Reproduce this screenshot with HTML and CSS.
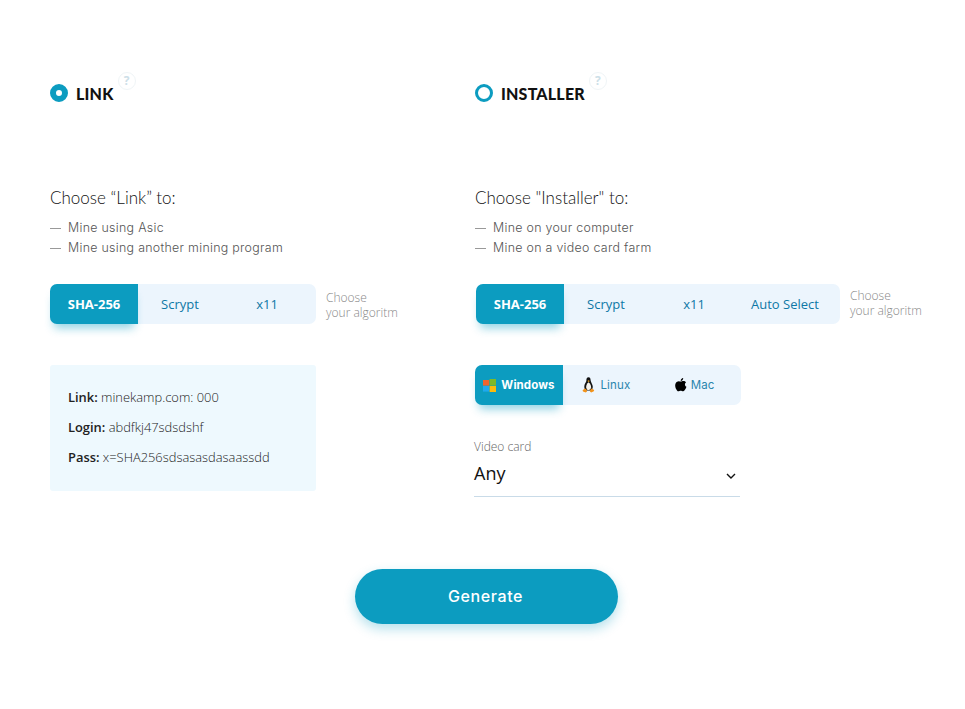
FILE: index.html
```html
<!DOCTYPE html>
<html lang="en">
<head>
    <meta charset="UTF-8">
    <meta name="viewport" content="width=device-width, initial-scale=1.0">
    <title>Generate</title>
    <link rel="stylesheet" href="styles.css">
</head>
<body>

<div class="columns">
    <!-- Link -->
    <section class="col">
        <div class="title">
            <span class="radio radio-on"></span>
            <span class="title-text">LINK<span class="help">?</span></span>
        </div>
        <h2 class="choose">Choose “Link” to:</h2>
        <ul class="uses">
            <li>Mine using Asic</li>
            <li>Mine using another mining program</li>
        </ul>
        <div class="algo-row">
            <div class="seg">
                <a class="seg-item active w88">SHA-256</a>
                <a class="seg-item w84">Scrypt</a>
                <a class="seg-item w90">x11</a>
            </div>
            <p class="hint">Choose<br>your algoritm</p>
        </div>
        <div class="info">
            <p><b>Link:</b> minekamp.com: 000</p>
            <p><b>Login:</b> abdfkj47sdsdshf</p>
            <p><b>Pass:</b> x=SHA256sdsasasdasaassdd</p>
        </div>
    </section>

    <!-- Installer -->
    <section class="col">
        <div class="title">
            <span class="radio"></span>
            <span class="title-text">INSTALLER<span class="help">?</span></span>
        </div>
        <h2 class="choose">Choose "Installer" to:</h2>
        <ul class="uses">
            <li>Mine on your computer</li>
            <li>Mine on a video card farm</li>
        </ul>
        <div class="algo-row algo-row-wide">
            <div class="seg">
                <a class="seg-item active w88">SHA-256</a>
                <a class="seg-item w84">Scrypt</a>
                <a class="seg-item w92">x11</a>
                <a class="seg-item w90">Auto Select</a>
            </div>
            <p class="hint hint-up">Choose<br>your algoritm</p>
        </div>
        <div class="seg seg-os">
            <a class="seg-item active w88 os">
                <svg width="13" height="13" viewBox="0 0 13 13">
                    <rect x="0" y="1" width="6.2" height="5.6" fill="#f0642d"/>
                    <rect x="6.6" y="0" width="6.4" height="6.6" fill="#7db928"/>
                    <rect x="0" y="7" width="6.2" height="5.6" fill="#1fa9ee"/>
                    <rect x="6.6" y="7" width="6.4" height="6" fill="#fbbb0c"/>
                </svg>
                <span>Windows</span>
            </a>
            <a class="seg-item w87 os">
                <svg width="13" height="16" viewBox="0 0 13 16">
                    <path d="M6.5 0.3C4.8 0.3 4.3 1.7 4.4 3.4 4.5 5 2.4 6.8 2.3 9.2 2.2 11 2.8 12.6 4 13.4L9 13.4C10.4 12.4 11 10.8 10.7 9 10.3 6.8 8.7 5 8.6 3.2 8.5 1.6 8.1 0.3 6.5 0.3Z" fill="#111"/>
                    <path d="M6.6 5.2C5 6.4 4 8.4 4.2 10.4 4.4 12 5.4 13 6.6 13 8 13 9 11.8 9.1 10.2 9.2 8.2 8 6.2 6.6 5.2Z" fill="#f4f1ea"/>
                    <path d="M5.4 3.9L6.6 3.2 7.8 3.9 6.6 4.9Z" fill="#f2a51f"/>
                    <path d="M2.8 11.6L0.6 13.2 1 14.4 3.8 15.6 5 14.4 4.4 12.2Z" fill="#f2931a"/>
                    <path d="M9.6 11.4L12.2 13 11.8 14.2 9.2 15.6 7.9 14.4 8.6 12.2Z" fill="#f2931a"/>
                </svg>
                <span>Linux</span>
            </a>
            <a class="seg-item w91 os os-mac">
                <svg width="12" height="14" viewBox="0 0 12 14">
                    <path d="M8.2 0C8.3 1.5 7.2 2.9 5.7 2.9 5.6 1.4 6.8 0.2 8.2 0Z" fill="#000"/>
                    <path d="M5.9 3.6C6.6 3.6 7.3 3.1 8.4 3.1 9.4 3.1 10.4 3.6 11 4.5 9.4 5.4 9.6 7.9 11.5 8.7 11 10.1 10.4 11.4 9.4 12.6 8.5 13.7 7.7 13.2 6.8 12.9 6 12.6 5.3 12.7 4.5 13 3.5 13.4 2.9 13.6 2 12.5 0.4 10.5-0.5 7.3 0.8 5.1 1.5 3.9 2.6 3.2 3.8 3.2 4.6 3.2 5.3 3.6 5.9 3.6Z" fill="#000"/>
                </svg>
                <span>Mac</span>
            </a>
        </div>
        <div class="field">
            <label class="field-label">Video card</label>
            <div class="field-value">
                <span>Any</span>
                <svg width="10" height="6" viewBox="0 0 10 6"><path d="M1 1l4 4 4-4" fill="none" stroke="#111" stroke-width="1.4"/></svg>
            </div>
        </div>
    </section>
</div>

<div class="actions">
    <button class="generate">Generate</button>
</div>

</body>
</html>
```

FILE: styles.css
```css
* {
    margin: 0;
    padding: 0;
    box-sizing: border-box;
}

body {
    height: 709px;
    background: #fff;
    font-family: "Open Sans", sans-serif;
    overflow: hidden;
}

.columns {
    display: grid;
    grid-template-columns: 425px 1fr;
    padding: 84px 0 0 50px;
}

/* Заголовок с радио */
.title {
    display: flex;
    align-items: center;
    gap: 8px;
    height: 18px;
}

.radio {
    width: 18px;
    height: 18px;
    border-radius: 50%;
    border: 3.5px solid #0c9cc0;
    background: #fff;
}

.radio-on {
    border-width: 6px;
}

.title-text {
    position: relative;
    font-family: Lato, sans-serif;
    font-size: 16px;
    font-weight: 900;
    letter-spacing: 0.2px;
    color: #111;
}

.help {
    position: absolute;
    right: -22px;
    top: -12px;
    width: 18px;
    height: 18px;
    border: 1px solid #f0f5f7;
    border-radius: 50%;
    text-align: center;
    font-family: "Open Sans", sans-serif;
    font-size: 12px;
    font-weight: 700;
    line-height: 16px;
    letter-spacing: 0;
    color: #cde0e8;
}

.choose {
    margin-top: 86px;
    font-family: Lato, sans-serif;
    font-size: 17px;
    font-weight: 300;
    line-height: 20px;
    color: #111;
}

.uses {
    list-style: none;
    margin-top: 10px;
}

.uses li {
    height: 20px;
    font-family: Inter, sans-serif;
    font-size: 12.4px;
    font-weight: 300;
    letter-spacing: 0.3px;
    line-height: 20px;
    color: #555;
}

.uses li::before {
    content: "";
    display: inline-block;
    width: 11px;
    height: 1px;
    margin-right: 7px;
    vertical-align: 3px;
    background: #999;
}

/* Переключатели */
.algo-row {
    display: flex;
    align-items: center;
    gap: 10px;
    margin-top: 26px;
}

.algo-row-wide {
    margin-left: 1px;
}

.seg {
    display: flex;
    height: 40px;
    padding-right: 4px;
    background: #ecf5fd;
    border-radius: 7px;
}

.algo-row-wide .seg {
    padding-right: 10px;
}

.seg-item {
    display: flex;
    align-items: center;
    justify-content: center;
    font-size: 13px;
    color: #0e78a6;
}

.seg-item.active {
    background: #0c9cc0;
    border-radius: 7px 0 0 7px;
    color: #fff;
    font-weight: 700;
    box-shadow: 0 8px 10px -4px rgba(12, 156, 192, 0.45);
}

.w84 { width: 84px; }
.w87 { width: 87px; }
.w88 { width: 88px; }
.w90 { width: 90px; }
.w91 { width: 91px; }
.w92 { width: 92px; }

.hint {
    margin-top: 2px;
    font-size: 12px;
    font-weight: 300;
    line-height: 15px;
    color: #888;
}

.hint-up {
    margin-top: -3px;
}

.info {
    width: 266px;
    height: 126px;
    margin-top: 41px;
    padding: 17px 18px 0;
    background: #eef9fe;
    border-radius: 3px;
    font-size: 12.9px;
    font-weight: 300;
    line-height: 30px;
    color: #222;
}

.info b {
    font-weight: 600;
}

/* Выбор ОС */
.seg-os {
    width: 266px;
    margin-top: 41px;
    padding-right: 0;
}

.os {
    gap: 5px;
    font-family: Inter, sans-serif;
    font-size: 11.5px;
    font-weight: 400;
    letter-spacing: 0.2px;
    color: #2a85ad;
}

.os-mac {
    gap: 4px;
    letter-spacing: 0;
    padding-right: 2px;
}

.seg-item.active.os {
    font-weight: 700;
    letter-spacing: 0.1px;
}

/* Видеокарта */
.field {
    width: 266px;
    margin: 34px 0 0 -1px;
    border-bottom: 1px solid #c9dbe8;
}

.field-label {
    display: block;
    font-size: 12px;
    font-weight: 300;
    line-height: 16px;
    color: #666;
}

.field-value {
    display: flex;
    justify-content: space-between;
    align-items: center;
    height: 41px;
    padding: 0 4px 6px 0;
    font-size: 18px;
    font-weight: 400;
    color: #111;
}

.field-value svg {
    margin-top: 6px;
}

.actions {
    display: flex;
    justify-content: center;
    padding-left: 8px;
    margin-top: 72px;
}

.generate {
    width: 263px;
    height: 55px;
    padding: 0 2px 2px 0;
    border: none;
    border-radius: 28px;
    background: #0c9cc0;
    box-shadow: 0 5px 12px rgba(12, 156, 192, 0.3);
    color: #fff;
    font-family: Inter, sans-serif;
    font-size: 16px;
    font-weight: 500;
    letter-spacing: 0.6px;
    cursor: pointer;
}
```
